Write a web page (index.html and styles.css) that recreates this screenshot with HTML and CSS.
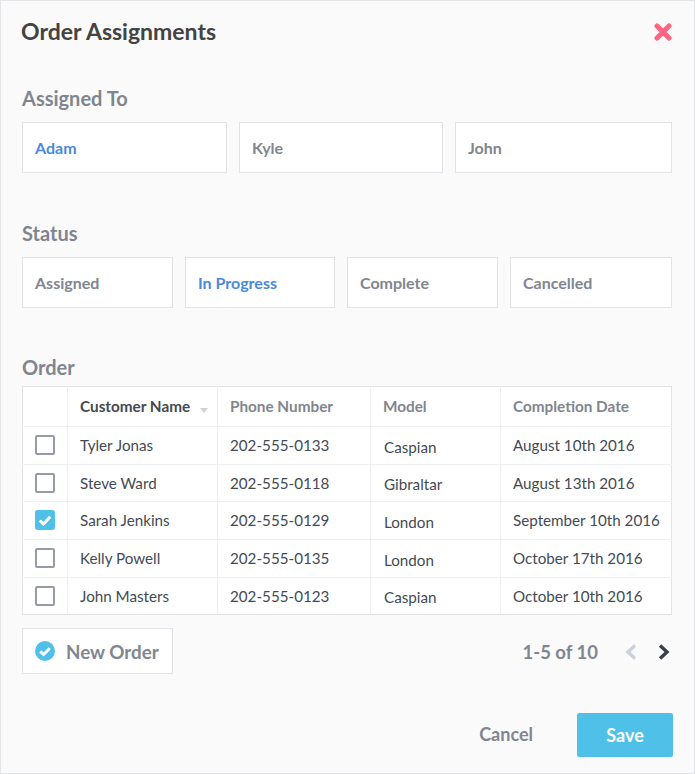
FILE: index.html
```html
<!DOCTYPE html>
<html lang="en">
<head>
    <meta charset="UTF-8">
    <title>Order Assignments</title>
    <link rel="stylesheet" href="styles.css">
</head>
<body>
<div class="modal">
  <header class="modal-head">
    <h1>Order Assignments</h1>
    <svg class="close" viewBox="0 0 18 18" width="18" height="18"><path d="M3 3l12 12M15 3L3 15" stroke="#ff6480" stroke-width="5" stroke-linecap="round"/></svg>
  </header>

  <h2 class="label label-assigned">Assigned To</h2>
  <div class="options options-people">
    <div class="option active">Adam</div>
    <div class="option">Kyle</div>
    <div class="option">John</div>
  </div>

  <h2 class="label label-status">Status</h2>
  <div class="options options-status">
    <div class="option">Assigned</div>
    <div class="option active">In Progress</div>
    <div class="option">Complete</div>
    <div class="option">Cancelled</div>
  </div>

  <h2 class="label label-order">Order</h2>
  <table class="orders">
    <colgroup>
      <col class="col-check"><col class="col-name"><col class="col-phone"><col class="col-model"><col class="col-date">
    </colgroup>
    <thead>
      <tr>
        <th></th>
        <th class="sorted">Customer Name <span class="sort-arrow"></span></th>
        <th>Phone Number</th>
        <th>Model</th>
        <th>Completion Date</th>
      </tr>
    </thead>
    <tbody>
      <tr>
        <td class="check"><span class="checkbox"></span></td>
        <td>Tyler Jonas</td><td>202-555-0133</td><td class="model">Caspian</td><td>August 10th 2016</td>
      </tr>
      <tr class="short">
        <td class="check"><span class="checkbox"></span></td>
        <td>Steve Ward</td><td>202-555-0118</td><td class="model">Gibraltar</td><td>August 13th 2016</td>
      </tr>
      <tr>
        <td class="check">
          <span class="checkbox checked"><svg viewBox="0 0 20 20" width="20" height="20"><path d="M4.8 10.5l3.7 3.5L15.2 6.8" fill="none" stroke="#fff" stroke-width="3"/></svg></span>
        </td>
        <td>Sarah Jenkins</td><td>202-555-0129</td><td class="model">London</td><td>September 10th 2016</td>
      </tr>
      <tr>
        <td class="check"><span class="checkbox"></span></td>
        <td>Kelly Powell</td><td>202-555-0135</td><td class="model">London</td><td>October 17th 2016</td>
      </tr>
      <tr class="short">
        <td class="check"><span class="checkbox"></span></td>
        <td>John Masters</td><td>202-555-0123</td><td class="model">Caspian</td><td>October 10th 2016</td>
      </tr>
    </tbody>
  </table>

  <div class="table-foot">
    <button class="new-order">
      <svg viewBox="0 0 20 20" width="20" height="20"><circle cx="10" cy="10" r="10" fill="#4fc0e8"/><path d="M5.2 10.3l3.4 3.2L14.8 7.3" fill="none" stroke="#fff" stroke-width="3"/></svg>
      New Order
    </button>
    <div class="pager">
      <span class="pager-count">1-5 of 10</span>
      <svg viewBox="0 0 12 16" width="12" height="16"><path d="M10 1.5L3 8l7 6.5" fill="none" stroke="#ccd1d9" stroke-width="3.4"/></svg>
      <svg viewBox="0 0 12 16" width="12" height="16"><path d="M2 1.5L9 8l-7 6.5" fill="none" stroke="#3a3f4a" stroke-width="3.4"/></svg>
    </div>
  </div>

  <footer class="modal-foot">
    <button class="cancel">Cancel</button>
    <button class="save">Save</button>
  </footer>
</div>
</body>
</html>
```

FILE: styles.css
```css
* {
  box-sizing: border-box;
}

body {
  margin: 0;
  font-family: Lato, "Liberation Sans", sans-serif;
  color: #434a54;
}

.modal {
  width: 695px;
  height: 774px;
  padding: 0 22px 0 21px;
  background: #fafafa;
  border: 1px solid #e3e5e8;
}

/* Header */
.modal-head {
  display: flex;
  justify-content: space-between;
  align-items: center;
  height: 60px;
}

.modal-head h1 {
  margin: 0 0 0 -1px;
  font-size: 23px;
  font-weight: 700;
  color: #434343;
}

.close {
  margin-top: 2px;
  margin-right: 0;
}

/* Option groups */
.label {
  margin: 0;
  font-size: 20px;
  font-weight: 700;
  line-height: 24px;
  color: #7f8690;
}

.label-assigned {
  margin-top: 25px;
}

.label-status {
  margin-top: 48px;
}

.label-order {
  margin-top: 47px;
}

.options {
  display: grid;
  gap: 12px;
  margin-top: 12px;
}

.options-people {
  grid-template-columns: 205px 204px 217px;
}

.options-status {
  grid-template-columns: 151px 150px 151px 162px;
}

.option {
  height: 51px;
  line-height: 50px;
  padding: 0 12px;
  background: #fff;
  border: 1px solid #e1e3e6;
  font-size: 16px;
  font-weight: 700;
  color: #7f8690;
}

.option.active {
  color: #4a89dc;
}

/* Orders table */
.orders {
  width: 649px;
  margin-top: 7px;
  border-collapse: collapse;
  table-layout: fixed;
  background: #fff;
  border: 1px solid #e1e3e6;
  font-size: 15.2px;
}

.col-check { width: 45px; }
.col-name { width: 150px; }
.col-phone { width: 153px; }
.col-model { width: 130px; }
.col-date { width: 171px; }

.orders th,
.orders td {
  padding: 0 12px;
  border: 1px solid #eeeff1;
  text-align: left;
  white-space: nowrap;
}

.orders th {
  height: 40px;
  padding-bottom: 2px;
  border-top-color: #e1e3e6;
  font-size: 15.3px;
  font-weight: 700;
  color: #7f8690;
}

.orders th.sorted {
  color: #434a54;
}

.orders td {
  height: 38px;
  color: #434a54;
}

.orders tr.short td {
  height: 37px;
}

.orders tr:last-child td {
  border-bottom-color: #e1e3e6;
}

.orders tr > :first-child {
  border-left-color: #e1e3e6;
}

.orders tr > :last-child {
  border-right-color: #e1e3e6;
}

.sort-arrow {
  display: inline-block;
  margin-left: 6px;
  border: 4.5px solid transparent;
  border-top: 5px solid #ccd1d9;
  border-bottom: 0;
  vertical-align: -1px;
}

.orders td.model {
  padding-left: 13px;
  padding-top: 2px;
}

.orders td.check {
  padding: 0 0 0 12px;
}

/* the 38px rows sit their content a pixel high */
.orders tr:not(.short) td:not(.model) {
  padding-bottom: 2px;
}

.checkbox {
  display: block;
  width: 20px;
  height: 20px;
  background: #fff;
  border: 2px solid #969ba6;
  border-radius: 2px;
}

.checkbox.checked {
  background: #4fc0e8;
  border: 0;
  border-radius: 3px;
}

.checkbox svg {
  display: block;
}

/* Below the table */
.table-foot {
  display: flex;
  justify-content: space-between;
  align-items: center;
  margin-top: 13px;
}

button {
  font-family: inherit;
  font-weight: 700;
  cursor: pointer;
}

.new-order {
  display: flex;
  align-items: center;
  gap: 11px;
  width: 151px;
  height: 46px;
  padding: 0 12px;
  background: #fff;
  border: 1px solid #e1e3e6;
  font-size: 18.8px;
  color: #7f8690;
}

.pager {
  display: flex;
  align-items: center;
  gap: 21px;
  margin-top: 2px;
  margin-right: 2px;
  font-size: 18.5px;
  font-weight: 700;
  color: #7f8690;
}

.pager-count {
  margin-right: 6px;
}

.modal-foot {
  display: flex;
  justify-content: flex-end;
  align-items: center;
  gap: 44px;
  margin-top: 39px;
  margin-right: -1px;
}

.cancel {
  margin-bottom: 2px;
  padding: 0;
  background: none;
  border: 0;
  font-size: 18px;
  color: #7f8690;
}

.save {
  width: 96px;
  height: 44px;
  background: #4fc0e8;
  border: 0;
  border-radius: 2px;
  font-size: 18px;
  color: #fff;
}
```
